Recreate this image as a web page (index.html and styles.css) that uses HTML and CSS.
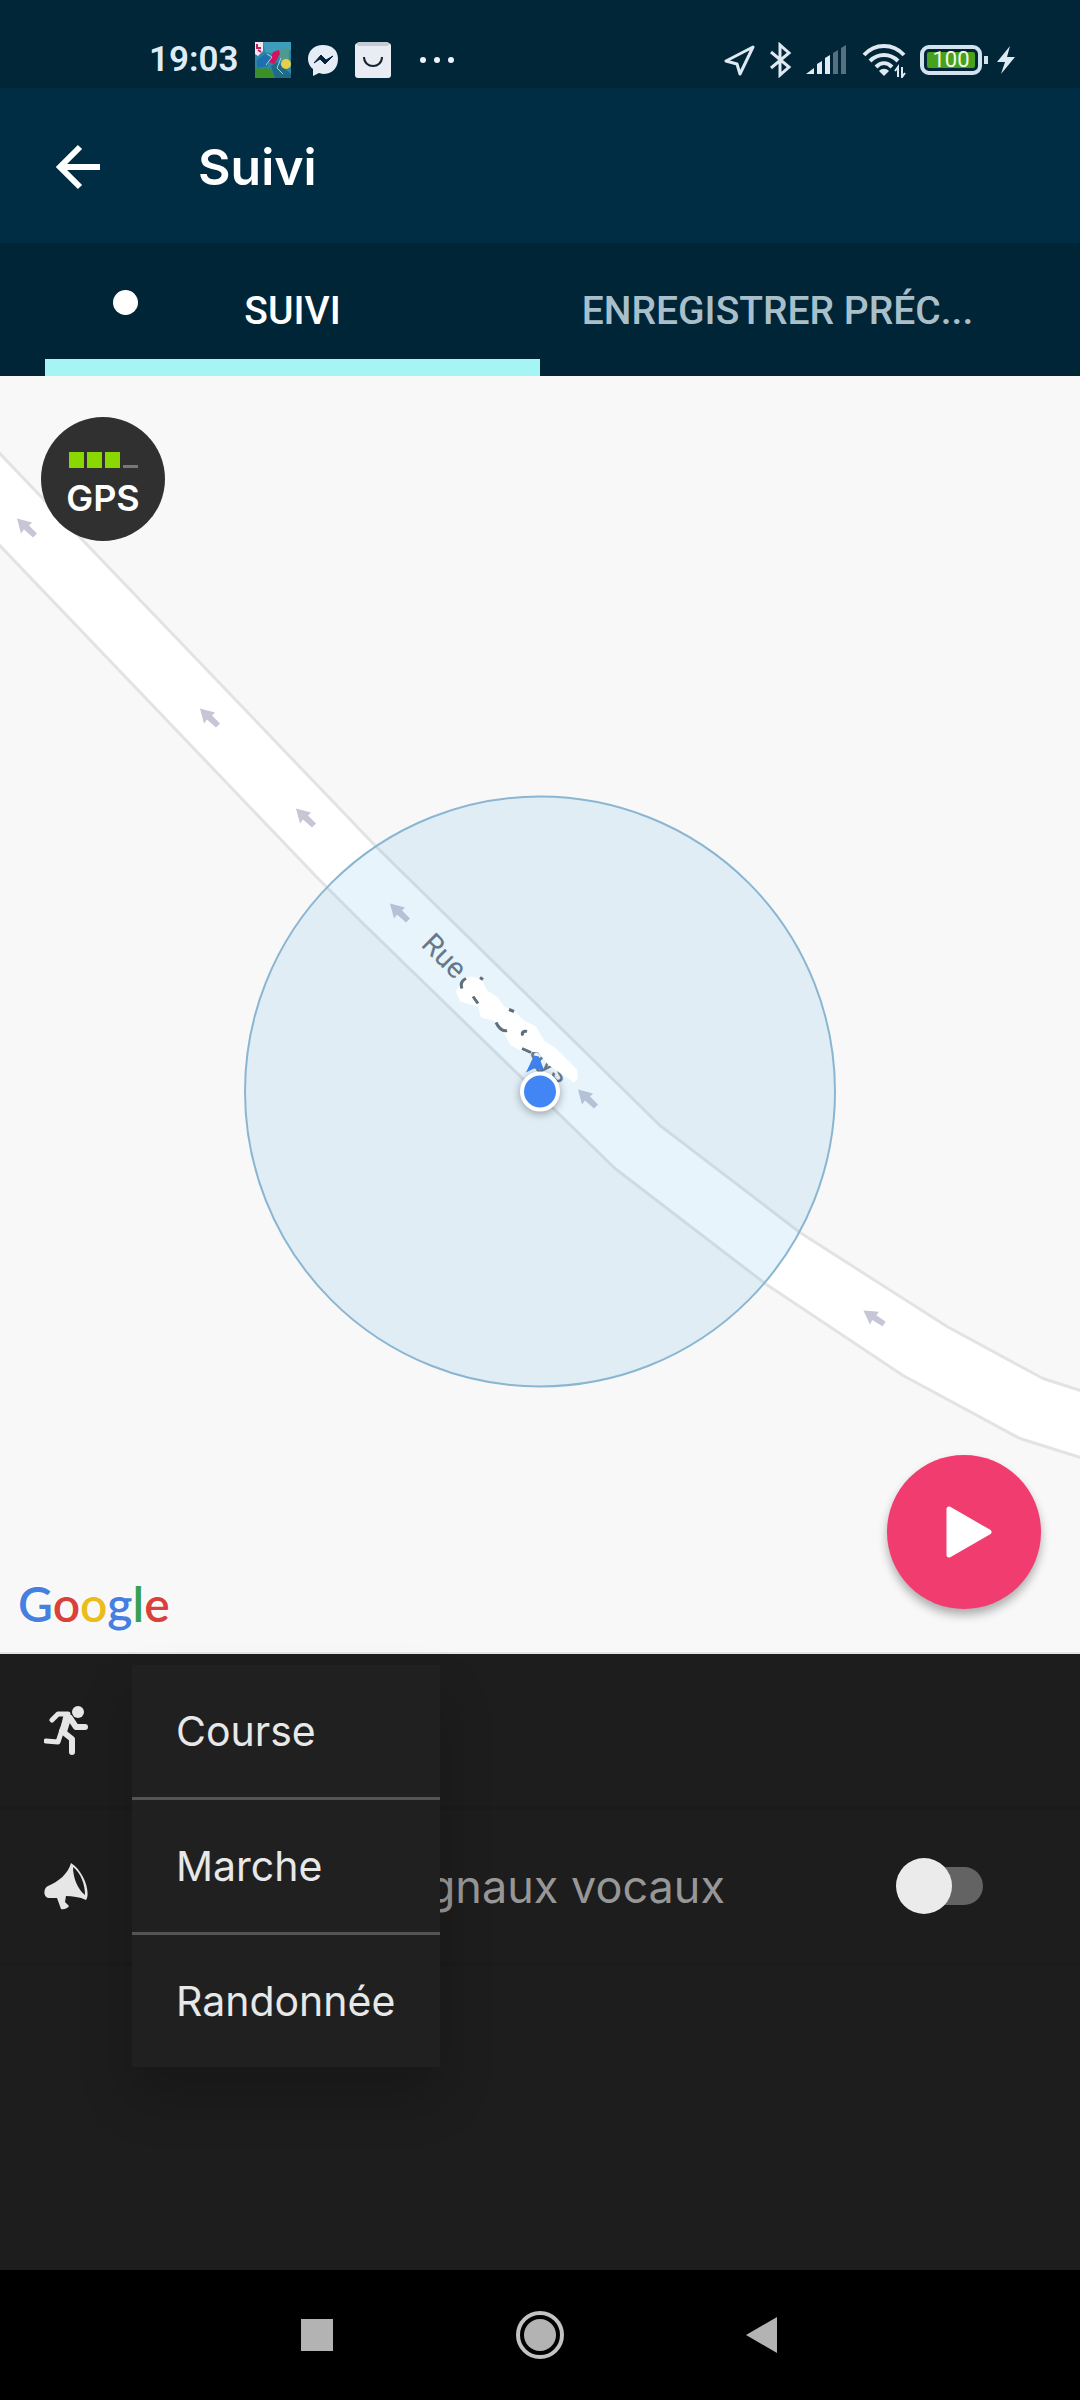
FILE: index.html
```html
<!DOCTYPE html>
<html lang="fr">
<head>
<meta charset="utf-8">
<meta name="viewport" content="width=device-width, initial-scale=1">
<title>Suivi</title>
<link rel="stylesheet" href="styles.css">
</head>
<body>
<div class="app">
  <div class="status">
    <div class="status-left">
      <span class="clock">19:03</span>
      <svg class="ic" width="36" height="36" viewBox="0 0 36 36">
        <rect width="36" height="36" fill="#2c86a8"/>
        <path d="M8 0h28v8l-14 4-12-2z" fill="#3d9dba"/>
        <path d="M22 8l12-2v12l-8 2z" fill="#4f9a8f"/>
        <path d="M2 18l8-6 6 4-4 8-10 2z" fill="#1f6fb0"/>
        <path d="M0 26c6 2 10-2 16 2l4 8H0z" fill="#3b8f24"/>
        <path d="M16 24l6-4 14 12v4H20z" fill="#206a86"/>
        <circle cx="31" cy="22" r="5" fill="#e8cf4a"/>
        <path d="M18 10l6-2 1 4-6 10-5-2z" fill="#d3125f"/>
        <path d="M0 0h8v9l-5 5-3-2z" fill="#f3e8f0"/>
        <path d="M2 2v4h4M3 8l3 2" stroke="#c21d5c" stroke-width="2" fill="none"/>
        <path d="M12 12l5 3-6 8M26 16l-4 10 6 6" stroke="#9bd3df" stroke-width="1" fill="none"/>
      </svg>
      <svg class="ic" width="32" height="32" viewBox="0 0 32 32">
        <path d="M16 1C7 1 1 7 1 15c0 4 2 8 5 10v7l6-3c1 0 3 1 4 1 9 0 15-6 15-15S25 1 16 1z" fill="#e6ecf5"/>
        <path d="M7 19l7-8 5 5 7-4-8 8-5-5z" fill="#052338" stroke="#052338" stroke-width="1"/>
      </svg>
      <svg class="ic" width="36" height="36" viewBox="0 0 36 36">
        <rect y="1" width="36" height="35" rx="3" fill="#e9ecf2"/>
        <rect x="2" width="32" height="4" rx="2" fill="#c4ccd4"/>
        <path d="M9 15c0 12 18 12 18 0" fill="none" stroke="#14232e" stroke-width="2"/>
      </svg>
      <svg class="ic dots" width="36" height="8" viewBox="0 0 36 8" fill="#eef3f8">
        <circle cx="4" cy="4" r="3"/><circle cx="18" cy="4" r="3"/><circle cx="32" cy="4" r="3"/>
      </svg>
    </div>
    <div class="status-right">
      <svg width="32" height="34" viewBox="0 0 32 34"><path d="M29 4L2 18l11 3 3 10z" fill="none" stroke="#dfe9f2" stroke-width="3" stroke-linejoin="round"/></svg>
      <svg width="22" height="36" viewBox="0 0 22 36"><path d="M1 10l18 15-9 8V3l9 8L1 26" fill="none" stroke="#dfe9f2" stroke-width="3"/></svg>
      <svg width="42" height="32" viewBox="0 0 42 32"><g fill="#e3ebf3"><path d="M0 30l8-6v6z"/><path d="M11 20l5-3v13h-5z"/><path d="M19 14l5-3v19h-5z"/></g><g fill="#56707f"><path d="M27 9l5-3v24h-5z"/><path d="M35 4l5-3v29h-5z"/></g></svg>
      <svg width="44" height="36" viewBox="0 0 44 36"><g fill="none" stroke="#dfe9f2" stroke-width="4"><path d="M2 13c11-12 29-12 40 0"/><path d="M8 19c8-8 20-8 28 0"/><path d="M14 25c5-5 11-5 16 0"/></g><path d="M17 29c3-3 7-3 10 0l-5 5z" fill="#dfe9f2"/><path d="M36 35V25l-3 4M40 25v10l3-4" stroke="#dfe9f2" stroke-width="2" fill="none"/></svg>
      <div class="battery"><span>100</span></div>
      <svg width="20" height="30" viewBox="0 0 20 30"><path d="M14 1L1 17h8L5 29l14-17h-8z" fill="#dfe9f2"/></svg>
    </div>
  </div>

  <header class="appbar">
    <button class="back" aria-label="Retour">
      <svg width="48" height="48" viewBox="0 0 48 48"><path d="M46 24H6M26 4L6 24l20 20" fill="none" stroke="#fff" stroke-width="6"/></svg>
    </button>
    <h1>Suivi</h1>
  </header>

  <div class="tabs" role="tablist">
    <button class="tab active" role="tab" aria-selected="true"><span class="rec"></span>SUIVI</button>
    <button class="tab" role="tab" aria-selected="false">ENREGISTRER PRÉC...</button>
  </div>

  <main class="map">
    <svg class="canvas" viewBox="0 375 1080 1277" preserveAspectRatio="xMidYMid slice">
      <defs><path id="way" d="M-10-10L5-6 2-3 10 5 6 9-3 1-6 5z"/></defs>
      <path d="M-6 447L375 845 660 1125 800 1232 947 1326 1043 1378 1090 1393V1460L1020 1438 903 1375 765 1283 615 1168 360 920 320 880-6 539z" fill="#fff" stroke="#e2e3e4" stroke-width="3" stroke-linejoin="round"/>
      <g fill="#c6c6d6">
        <use href="#way" x="27" y="528"/><use href="#way" x="210" y="718"/><use href="#way" x="306" y="818"/>
        <use href="#way" x="400" y="913"/><use href="#way" x="588" y="1099"/>
        <use href="#way" transform="translate(875 1318) rotate(-10)"/>
      </g>
      <circle cx="540" cy="1091" r="295" fill="#2f9fe8" fill-opacity=".115"/>
      <circle cx="540" cy="1091" r="295" fill="none" stroke="#8ab6d2" stroke-width="2"/>
      <g class="street" transform="translate(420 945) rotate(45)">
        <text x="0" y="0">Rue</text>
        <text x="153" y="0">ays</text>
      </g>
      <path d="M463 978l8-2 10 2 6 12 11 7 6 9 12 6 8 8 12 6 8 14 12 8 12 12 9 9 1 9-4 4-12-8-14-10-10-12-18-2-10-6-5-10-9-13-15-4-3-11-18-5-4-10z" fill="#fff"/>
      <path d="M462 988c-2-5 0-8 4-10M480 977l3 2M496 1022c3 6 7 9 11 8M473 996l5 7M509 1009l5 2M523 1035c-2-3 1-5 4-4M522 1048l9 4" fill="none" stroke="#5e6f7e" stroke-width="3"/>
      <path d="M534 1055l5 1 5 14-10-2-8 4z" fill="#3f82ee"/>
      <circle class="pin" cx="540" cy="1091" r="18" fill="#4285f4" stroke="#fff" stroke-width="4"/>
    </svg>
    <div class="gps">
      <div class="bars"><i></i><i></i><i></i><i class="off"></i></div>
      <span>GPS</span>
    </div>
    <div class="google"><span class="b">G</span><span class="r">o</span><span class="y">o</span><span class="b">g</span><span class="g">l</span><span class="r">e</span></div>
    <button class="play" aria-label="Démarrer">
      <svg width="48" height="56" viewBox="0 0 48 56"><path d="M4 5v46l40-23z" fill="#fff" stroke="#fff" stroke-width="5" stroke-linejoin="round"/></svg>
    </button>
  </main>

  <section class="panel">
    <div class="row">
      <svg width="44" height="52" viewBox="0 0 44 52">
        <circle cx="34" cy="8" r="6" fill="#e6e6e6"/>
        <path d="M8 16l6-6h10l-6 16-4 12-12-1" fill="none" stroke="#e6e6e6" stroke-width="5" stroke-linecap="round" stroke-linejoin="round"/>
        <path d="M20 9l8 3-5 16-9 6 3-12z" fill="#e6e6e6"/>
        <path d="M26 14l6 9h9M18 27l10 8v13" fill="none" stroke="#e6e6e6" stroke-width="6" stroke-linecap="round" stroke-linejoin="round"/>
      </svg>
      <ul class="menu">
        <li><button>Course</button></li>
        <li><button>Marche</button></li>
        <li><button>Randonnée</button></li>
      </ul>
    </div>
    <div class="row">
      <svg width="44" height="48" viewBox="0 0 44 48">
        <path d="M27 1C24 12 14 20 4 24c-5 2-5 12 1 12h8l4 11c3 1 7-1 8-3l-4-4 1-6c6 0 14 1 20 4 5-7-2-29-15-37z" fill="#e6e6e6"/>
        <path d="M29 5c8 6 12 18 12 28-7-5-12-17-12-28z" fill="#1d1d1d"/>
      </svg>
      <label for="voice">Signaux vocaux</label>
      <input class="switch" type="checkbox" id="voice">
    </div>
  </section>

  <nav class="sysnav">
    <button aria-label="Récents"><svg width="50" height="50" viewBox="0 0 50 50"><path d="M9 9h32v32H9z" fill="#b3b3b3"/></svg></button>
    <button aria-label="Accueil"><svg width="50" height="50" viewBox="0 0 50 50"><circle cx="25" cy="25" r="16" fill="#b3b3b3"/><circle cx="25" cy="25" r="22" fill="none" stroke="#c3c3c3" stroke-width="4"/></svg></button>
    <button aria-label="Retour"><svg width="50" height="50" viewBox="0 0 50 50"><path d="M8 25L39 7v36z" fill="#b3b3b3"/></svg></button>
  </nav>
</div>
</body>
</html>
```
FILE: styles.css
```css
* { box-sizing: border-box; }
body { margin: 0; background: #1d1d1d; font-family: Inter, "Liberation Sans", sans-serif; }
button { border: 0; padding: 0; background: none; color: inherit; font: inherit; cursor: pointer; }
svg { display: block; flex: none; }

.app { display: flex; flex-direction: column; min-height: 100vh; }

.status {
  display: flex; justify-content: space-between; align-items: flex-start;
  height: 88px; padding: 32px 64px 0 149px; background: #002638;
  font-family: Roboto, sans-serif;
}
.status-left, .status-right { display: flex; align-items: center; height: 56px; }
.status-left { gap: 16px; }
.status-right { gap: 14px; }
.clock { color: #dfecf8; font-size: 35px; font-weight: 600; line-height: 40px; }
.dots { margin-left: 12px; }
.battery {
  position: relative; width: 62px; height: 30px; padding: 3px;
  border: 4px solid #d3e2ec; border-radius: 9px;
}
.battery span {
  display: block; background: #48a01f; color: #f2fbe6; border-radius: 2px;
  font-size: 22px; line-height: 16px; text-align: center;
}
.battery::after {
  content: ""; position: absolute; right: -10px; top: 7px;
  width: 4px; height: 8px; background: #d3e2ec;
}

.appbar { display: flex; align-items: center; gap: 96px; height: 155px; padding: 2px 54px 0 54px; background: #002d43; }
h1 { margin: 0; color: #fff; font-size: 50px; font-weight: 600; line-height: 60px; }

.tabs { display: grid; grid-template-columns: 1fr 1fr; height: 133px; padding: 0 45px; background: #002536; }
.tab {
  position: relative; padding: 0 20px 0 0; border-top: 20px solid transparent; border-bottom: 17px solid transparent;
  color: #a9bfca; font-family: Roboto, sans-serif; font-size: 39px; font-weight: 500; line-height: 48px;
  text-align: center; white-space: nowrap;
}
.tab.active { padding-right: 0; color: #fff; border-bottom-color: #a5f5f5; }
.rec { position: absolute; left: 68px; top: 27px; width: 25px; height: 25px; border-radius: 50%; background: #fff; }

.map { position: relative; flex: 1; min-height: 600px; overflow: hidden; background: #f8f8f8; border-bottom: 2px solid #e4e6e6; }
.canvas { position: absolute; inset: 0; width: 100%; height: 100%; }
.street { font-family: Roboto, sans-serif; font-size: 29px; fill: #66788a; }
.pin { filter: drop-shadow(0 2px 4px rgba(0, 0, 0, .35)); }
.gps {
  position: absolute; left: 41px; top: 41px; width: 124px; height: 124px; border-radius: 50%;
  display: flex; flex-direction: column; align-items: center; gap: 8px; padding-top: 35px;
  background: #303030; color: #fff; font-size: 36px; font-weight: 600; line-height: 44px;
}
.bars { display: flex; gap: 3px; }
.bars i { width: 15px; height: 16px; background: #8bd800; }
.bars .off { background: none; border-bottom: 3px solid #777; }
.google {
  position: absolute; left: 18px; bottom: 18px; font-family: Lato, sans-serif; font-size: 48px; line-height: 60px;
  font-weight: 600; text-shadow: 0 0 3px #fff, 0 0 3px #fff;
}
.b { color: #4580e0; } .r { color: #d9423a; } .y { color: #ecbb1c; } .g { color: #34a155; }
.play {
  position: absolute; right: 39px; bottom: 43px; width: 154px; height: 154px; border-radius: 50%;
  display: flex; align-items: center; justify-content: center; padding-left: 10px;
  background: #f13c70; box-shadow: 0 6px 10px rgba(0, 0, 0, .3);
}

.panel { padding-bottom: 304px; background: #1d1d1d; }
.row {
  position: relative; display: flex; align-items: center; height: 156px; padding: 0 97px 0 44px;
  border-bottom: 4px solid #1b1b1b;
}
.row label { flex: 1; margin-left: 300px; padding-top: 2px; color: #979797; font-size: 45px; line-height: 52px; }
.switch {
  appearance: none; position: relative; width: 82px; height: 38px; margin: 0;
  border-radius: 19px; background: #636363; cursor: pointer;
}
.switch::before {
  content: ""; position: absolute; left: -5px; top: -9px;
  width: 56px; height: 56px; border-radius: 50%; background: #ebebeb;
}
.menu {
  position: absolute; z-index: 1; left: 132px; top: 11px; width: 308px; margin: 0; padding: 0; list-style: none;
  background: #202020; box-shadow: 0 30px 50px rgba(0, 0, 0, .2);
}
.menu li + li { border-top: 3px solid #545454; }
.menu button { display: block; width: 100%; height: 132px; padding-left: 44px; text-align: left; color: #e8e8e8; font-size: 41px; line-height: 48px; }

.sysnav { display: flex; justify-content: center; align-items: center; gap: 173px; height: 130px; background: #000; }
```
